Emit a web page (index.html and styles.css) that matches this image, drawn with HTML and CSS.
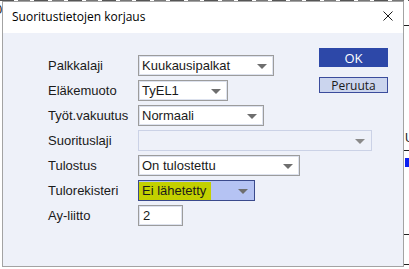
FILE: index.html
```html
<!DOCTYPE html>
<html lang="fi">
<head>
    <meta charset="UTF-8">
    <meta name="viewport" content="width=device-width, initial-scale=1.0">
    <title>Suoritustietojen korjaus</title>
    <link rel="stylesheet" href="styles.css">
</head>
<body>
    <!-- bits of the window behind the dialog -->
    <div class="behind behind-top"></div>
    <div class="behind behind-left">0</div>
    <div class="behind behind-line line-1"></div>
    <div class="behind behind-char">U</div>
    <div class="behind behind-line line-2"></div>
    <div class="behind behind-sel"></div>
    <div class="behind behind-line line-3"></div>
    <div class="behind behind-line line-4"></div>

    <main class="dialog">
        <header class="titlebar">
            <span class="title">Suoritustietojen korjaus</span>
            <svg class="close" width="10" height="10" viewBox="0 0 10 10">
                <path d="M0.5 0.5 L9.5 9.5 M9.5 0.5 L0.5 9.5" stroke="#1a1a1a" stroke-width="1" fill="none" />
            </svg>
        </header>

        <section class="content">
            <div class="form">
                <label class="label">Palkkalaji</label>
                <div class="combo w-136"><span class="value">Kuukausipalkat</span><i class="arrow"></i></div>

                <label class="label">Eläkemuoto</label>
                <div class="combo w-90"><span class="value">TyEL1</span><i class="arrow"></i></div>

                <label class="label">Työt.vakuutus</label>
                <div class="combo w-126"><span class="value">Normaali</span><i class="arrow"></i></div>

                <label class="label">Suorituslaji</label>
                <div class="combo w-234 disabled"><span class="value"></span><i class="arrow"></i></div>

                <label class="label">Tulostus</label>
                <div class="combo w-162"><span class="value">On tulostettu</span><i class="arrow"></i></div>

                <label class="label">Tulorekisteri</label>
                <div class="combo w-117 focused"><span class="value"><mark class="hl">Ei lähetetty</mark></span><i class="arrow"></i></div>

                <label class="label">Ay-liitto</label>
                <div class="combo w-45 text"><span class="value">2</span></div>
            </div>

            <div class="buttons">
                <button class="btn primary">OK</button>
                <button class="btn secondary">Peruuta</button>
            </div>
        </section>
    </main>
</body>
</html>
```

FILE: styles.css
```css
body {
    margin: 0;
    width: 409px;
    height: 269px;
    position: relative;
    overflow: hidden;
    background-color: #ffffff;
    font-family: "Liberation Sans", Arial, sans-serif;
    font-size: 13px;
    color: #1a1a1a;
}

.behind {
    position: absolute;
}

.behind-top {
    left: 0;
    top: 0;
    width: 409px;
    height: 1px;
    background: repeating-linear-gradient(90deg, #555 0 14px, transparent 14px 18px, #777 18px 30px, transparent 30px 34px);
}

.behind-left {
    left: -5px;
    top: 3px;
    font-size: 13px;
    line-height: 13px;
}

.behind-line {
    right: 0;
    width: 5px;
    height: 1px;
    background-color: #222;
}

.line-1 { top: 25px; }
.line-2 { top: 150px; }
.line-3 { top: 234px; }
.line-4 { top: 264px; }

.behind-char {
    left: 405px;
    top: 132px;
    font-size: 12px;
    line-height: 12px;
}

.behind-sel {
    left: 405px;
    top: 158px;
    width: 4px;
    height: 9px;
    background-color: #0b1ff0;
}

.dialog {
    position: relative;
    margin: 1px 0 0 2px;
    width: 400px;
    height: 264px;
    border: 1px solid #a3a3a3;
    background-color: #eef1f9;
    display: flex;
    flex-direction: column;
}

.titlebar {
    height: 31px;
    background-color: #ffffff;
    display: flex;
    align-items: center;
    justify-content: space-between;
    padding: 0 10px 0 9px;
}

.title {
    font-family: "Open Sans", "Noto Sans", sans-serif;
    font-size: 12px;
    color: #000;
    margin-top: -2px;
}

.close {
    margin-top: -4px;
}

/* form and buttons share one grid area; buttons sit in the right column */
.content {
    display: grid;
    grid-template-columns: 271px 69px;
    padding: 15px 0 0 45px;
}

.form {
    grid-area: 1 / 1 / 2 / 3;
    display: grid;
    grid-template-columns: 90px auto;
    row-gap: 4px;
    align-items: center;
    align-content: start;
    justify-items: start;
    padding-top: 7px;
}

.label {
    line-height: 21px;
    color: #1a1a1a;
}

.combo {
    height: 21px;
    box-sizing: border-box;
    border: 1px solid #9c9c9c;
    box-shadow: inset 0 0 0 1px #dde2ee;
    background-color: #ffffff;
    display: flex;
    align-items: center;
    justify-content: space-between;
    padding: 0 6px 0 3px;
}

.value {
    line-height: 17px;
    white-space: nowrap;
}

.arrow {
    width: 0;
    height: 0;
    border-left: 5px solid transparent;
    border-right: 5px solid transparent;
    border-top: 5px solid #6e6e6e;
    margin-top: 1px;
}

.w-136 { width: 136px; }
.w-90 { width: 90px; }
.w-126 { width: 126px; }
.w-234 { width: 234px; }
.w-162 { width: 162px; }
.w-117 { width: 117px; }
.w-45 { width: 45px; }

.combo.disabled {
    background-color: #eef1f9;
    border-color: #cbd2e6;
    box-shadow: none;
}

.combo.disabled .arrow {
    border-top-color: #8a8a8a;
}

.combo.focused {
    border-color: #3a4a8c;
    box-shadow: none;
    background-color: #b5c3f3;
    padding-left: 0;
    align-items: flex-end;
}

.combo.focused .arrow {
    align-self: center;
}

.hl {
    display: block;
    background-color: #c3d000;
    color: #1a1a1a;
    padding: 0 5px 0 3px;
    height: 18px;
    line-height: 18px;
}

.combo.text {
    padding-left: 4px;
}

.buttons {
    grid-area: 1 / 2 / 2 / 3;
    align-self: start;
    display: flex;
    flex-direction: column;
    gap: 10px;
    width: 69px;
}

.btn {
    font-family: "Open Sans", "Noto Sans", sans-serif;
    font-size: 12px;
    border: none;
    padding: 0;
    cursor: pointer;
}

.primary {
    height: 19px;
    background-color: #2d48a8;
    color: #ffffff;
    font-size: 13px;
}

.secondary {
    height: 16px;
    line-height: 13px;
    background-color: #cbd5ee;
    border: 1px solid #3b4c9c;
    color: #1a1a1a;
}
```
